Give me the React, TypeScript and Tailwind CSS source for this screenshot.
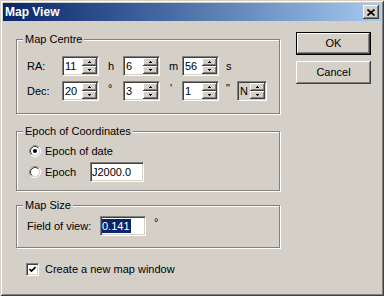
import React from 'react';

const raised =
    'bg-[#d4d0c8] shadow-[inset_-1px_-1px_#404040,inset_1px_1px_#fff,inset_-2px_-2px_#808080,inset_2px_2px_#d4d0c8]';
const sunken =
    'border border-t-[#808080] border-l-[#808080] border-r-white border-b-white p-[1px] shadow-[inset_1px_1px_#404040,inset_-1px_-1px_#d4d0c8]';

function Arrow({ up }: { up: boolean }) {
    return (
        <svg width="7" height="4" viewBox="0 0 7 4" shapeRendering="crispEdges">
            {up ? (
                <>
                    <rect x="3" y="1" width="1" height="1" fill="#000" />
                    <rect x="2" y="2" width="3" height="1" fill="#000" />
                </>
            ) : (
                <>
                    <rect x="2" y="1" width="3" height="1" fill="#000" />
                    <rect x="3" y="2" width="1" height="1" fill="#000" />
                </>
            )}
        </svg>
    );
}

function Spin({ value, narrow, grey }: { value: string; narrow?: boolean; grey?: boolean }) {
    return (
        <div className={`flex h-[20px] shrink-0 ${narrow ? 'w-[30px]' : 'w-[37px]'} ${sunken}`}>
            <div className={`flex-1 flex items-center pl-[1px] ${grey ? 'bg-[#d4d0c8]' : 'bg-white'}`}>{value}</div>
            <div className="flex flex-col w-[15px]">
                <div className={`h-[8px] flex items-center justify-center ${raised}`}>
                    <Arrow up />
                </div>
                <div className={`h-[8px] flex items-center justify-center ${raised}`}>
                    <Arrow up={false} />
                </div>
            </div>
        </div>
    );
}

function Radio({ checked }: { checked?: boolean }) {
    return (
        <svg width="12" height="12" viewBox="0 0 12 12">
            <circle cx="6" cy="6" r="5.5" fill="none" stroke="#fff" />
            <path d="M2.11 9.89 A5.5 5.5 0 0 1 9.89 2.11" fill="none" stroke="#808080" />
            <circle cx="6" cy="6" r="4.5" fill="#fff" stroke="#d4d0c8" />
            <path d="M2.82 9.18 A4.5 4.5 0 0 1 9.18 2.82" fill="none" stroke="#404040" />
            {checked && <circle cx="6" cy="6" r="2" fill="#000" />}
        </svg>
    );
}

function Group({ label, className, children }: { label: string; className: string; children: React.ReactNode }) {
    return (
        <div className={`relative border border-[#808080] shadow-[inset_1px_1px_#fff,1px_1px_#fff] ${className}`}>
            <span className="absolute -top-[7px] left-[6px] px-[2px] bg-[#d4d0c8] leading-[13px]">{label}</span>
            {children}
        </div>
    );
}

export default function App() {
    return (
        <div className="w-[384px] h-[296px] bg-[#d4d0c8] p-[3px] text-[11px] leading-[13px] text-black font-['Liberation_Sans',Arial,sans-serif] shadow-[inset_1px_1px_#d4d0c8,inset_-1px_-1px_#404040,inset_2px_2px_#fff,inset_-2px_-2px_#808080]">
            {/* Title bar */}
            <div className="h-[18px] flex items-center justify-between bg-gradient-to-r from-[#0a246a] to-[#a6caf0] pl-[2px] pr-[2px]">
                <span className="text-white font-bold text-[12px]">Map View</span>
                <div className={`w-[16px] h-[14px] flex items-center justify-center ${raised}`}>
                    <svg width="8" height="7" viewBox="0 0 8 7">
                        <path d="M0.5 0.5 L7.5 6.5 M7.5 0.5 L0.5 6.5" stroke="#000" strokeWidth="1.6" />
                    </svg>
                </div>
            </div>

            <div className="flex">
                {/* Left column */}
                <div className="ml-[13px] mt-[18px] w-[264px] flex flex-col">
                    <Group label="Map Centre" className="h-[75px] pt-[16px] pl-[10px]">
                        <div className="flex items-center h-[20px]">
                            <span className="w-[35px] shrink-0">RA:</span>
                            <Spin value="11" />
                            <span className="w-[24px] shrink-0 pl-[9px]">h</span>
                            <Spin value="6" />
                            <span className="w-[22px] shrink-0 pl-[9px]">m</span>
                            <Spin value="56" />
                            <span className="w-[18px] shrink-0 pl-[7px]">s</span>
                        </div>
                        <div className="flex items-center h-[20px] mt-[5px]">
                            <span className="w-[35px] shrink-0">Dec:</span>
                            <Spin value="20" />
                            <span className="w-[24px] shrink-0 pl-[9px] self-start pt-[1px]">°</span>
                            <Spin value="3" />
                            <span className="w-[22px] shrink-0 pl-[10px] self-start pt-[1px]">'</span>
                            <Spin value="1" />
                            <span className="w-[18px] shrink-0 pl-[7px] self-start pt-[1px]">"</span>
                            <Spin value="N" narrow grey />
                        </div>
                    </Group>

                    <Group label="Epoch of Coordinates" className="mt-[17px] h-[60px] pt-[11px] pl-[12px]">
                        <div className="flex items-center h-[16px]">
                            <Radio checked />
                            <span className="ml-[4px]">Epoch of date</span>
                        </div>
                        <div className="flex items-center h-[20px] mt-[3px]">
                            <Radio />
                            <span className="ml-[4px] w-[45px]">Epoch</span>
                            <div className={`w-[54px] h-[20px] bg-white flex items-center pl-[1px] ${sunken}`}>J2000.0</div>
                        </div>
                    </Group>

                    <Group label="Map Size" className="mt-[14px] h-[43px] pt-[10px] pl-[10px]">
                        <div className="flex items-center h-[20px]">
                            <span className="w-[73px]">Field of view:</span>
                            <div className={`w-[46px] h-[20px] bg-white flex items-center pl-[1px] ${sunken}`}>
                                <span className="bg-[#0a246a] text-white leading-[14px] pr-[1px]">0.141</span>
                            </div>
                            <span className="ml-[8px] self-start">°</span>
                        </div>
                    </Group>

                    <div className="mt-[15px] pl-[10px] flex items-center h-[13px]">
                        <div className={`w-[13px] h-[13px] bg-white flex items-center justify-center ${sunken} p-0`}>
                            <svg width="7" height="7" viewBox="0 0 7 7">
                                <path d="M0.5 3 L2.5 5 L6.5 1" fill="none" stroke="#000" strokeWidth="1.7" />
                            </svg>
                        </div>
                        <span className="ml-[6px]">Create a new map window</span>
                    </div>
                </div>

                {/* Buttons */}
                <div className="ml-[16px] mt-[11px] flex flex-col">
                    <div className="w-[75px] h-[23px] border border-black">
                        <div className={`w-full h-full flex items-center justify-center ${raised}`}>OK</div>
                    </div>
                    <div className={`mt-[6px] w-[75px] h-[23px] flex items-center justify-center ${raised}`}>Cancel</div>
                </div>
            </div>
        </div>
    );
}
